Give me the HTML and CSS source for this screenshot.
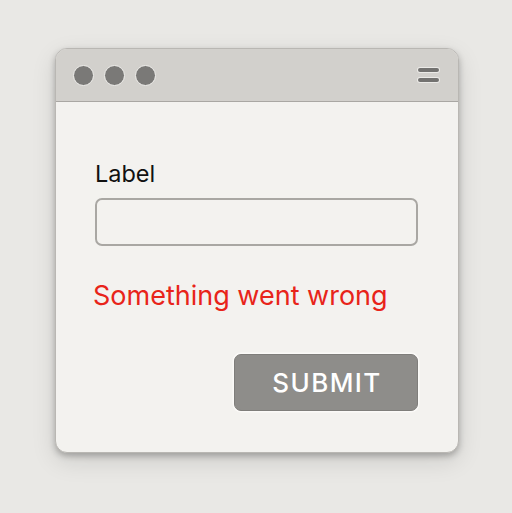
FILE: index.html
```html
<!DOCTYPE html>
<html>
<head>
<meta charset="utf-8">
<link rel="stylesheet" href="styles.css">
</head>
<body>
<div class="page">
  <div class="window">
    <div class="titlebar">
      <div class="dots">
        <span class="dot"></span><span class="dot"></span><span class="dot"></span>
      </div>
      <div class="menu"><span></span><span></span></div>
    </div>
    <div class="content">
      <label class="label">Label</label>
      <div class="input"></div>
      <div class="error">Something went wrong</div>
      <div class="actions"><button class="submit">SUBMIT</button></div>
    </div>
  </div>
</div>
</body>
</html>
```
FILE: styles.css
```css
html, body {
  margin: 0;
  padding: 0;
  background: #e9e8e5;
}
.page {
  width: 512px;
  height: 513px;
  padding: 48px 0 0 55px;
  box-sizing: border-box;
  font-family: Inter, "Liberation Sans", sans-serif;
}
.window {
  width: 404px;
  height: 405px;
  border-radius: 12px;
  background: #f3f2ef;
  border: 1px solid #b9b7b3;
  box-sizing: border-box;
  overflow: hidden;
  box-shadow: 0 3px 6px rgba(0,0,0,0.25), 0 8px 24px rgba(0,0,0,0.12);
  display: flex;
  flex-direction: column;
}
.titlebar {
  height: 52px;
  background: #d2d0cc;
  border-bottom: 1px solid #a9a7a3;
  display: flex;
  align-items: center;
  justify-content: space-between;
  padding: 0 19px 0 17px;
  flex-shrink: 0;
}
.dots {
  display: flex;
  gap: 10px;
}
.dot {
  width: 19px;
  height: 19px;
  border-radius: 50%;
  background: #7a7977;
  border: 1px solid #f0efec;
}
.menu {
  display: flex;
  flex-direction: column;
  gap: 6px;
}
.menu span {
  display: block;
  width: 21px;
  height: 4px;
  border-radius: 2px;
  background: #737270;
  box-shadow: 0 0 0 1px #ebeae7;
}
.content {
  padding: 58px 40px 0 39px;
  display: flex;
  flex-direction: column;
}
.label {
  font-size: 23.5px;
  line-height: 28px;
  color: #111;
}
.input {
  margin-top: 10px;
  height: 48px;
  border: 2px solid #a9a7a3;
  border-radius: 7px;
  box-sizing: border-box;
  background: #f3f2ef;
}
.error {
  margin-top: 34px;
  font-size: 27px;
  line-height: 32px;
  color: #e8241a;
  margin-left: -2px;
}
.actions {
  display: flex;
  justify-content: flex-end;
  margin-top: 42px;
}
.submit {
  width: 184px;
  height: 57px;
  border-radius: 7px;
  background: #8e8d8a;
  border: 1px solid #7f7e7b;
  box-shadow: 0 0 0 1.5px #fbfaf8;
  color: #fff;
  font-family: Inter, "Liberation Sans", sans-serif;
  font-size: 26px;
  font-weight: 500;
  letter-spacing: 1.4px;
  padding: 0;
  text-indent: 2px;
}
```
